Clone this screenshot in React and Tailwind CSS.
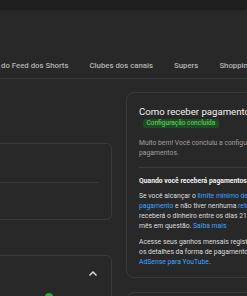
export default function App() {
  const link = "text-[#3ea6ff]";
  return (
    <div
      className="w-[247px] h-[296px] overflow-hidden bg-[#282828] flex flex-col"
      style={{ fontFamily: "Roboto, 'Noto Sans', sans-serif" }}
    >
      {/* top bar */}
      <div className="h-[8px] shrink-0 bg-[#1f1f1f] overflow-hidden shadow-[0_1px_3px_rgba(0,0,0,0.5)] relative z-10">
        <div className="-mt-[7px] text-[8px] leading-[10px] text-[#8a8a8a] whitespace-nowrap">
          seu canal
        </div>
      </div>

      {/* tabs */}
      <div className="shrink-0 h-[71px] border-b border-[#3a3a3a] flex items-end pb-[7px]">
        <div className="flex gap-[21px] pl-[1px] text-[7.8px] leading-[10px] font-medium text-[#b5b5b5] whitespace-nowrap">
          <span>do Feed dos Shorts</span>
          <span>Clubes dos canais</span>
          <span>Supers</span>
          <span>Shopping</span>
        </div>
      </div>

      {/* content */}
      <div className="flex gap-[14px] pt-[13px]">
        {/* left column */}
        <div className="w-[112px] shrink-0 flex flex-col pt-[51px] gap-[35px]">
          <div className="h-[77px] border-y border-r border-[#3a3a3a] rounded-r-[6px] flex flex-col">
            <div className="h-[38px]" />
            <div className="h-px bg-[#3a3a3a] mr-[12px]" />
          </div>
          <div className="h-[60px] border-t border-r border-[#3a3a3a] rounded-tr-[6px] relative">
            <svg
              className="absolute left-[88px] top-[14px]"
              width="10"
              height="7"
              viewBox="0 0 10 7"
            >
              <path d="M1.5 5.5 L5 2 L8.5 5.5" stroke="#e0e0e0" strokeWidth="1.4" fill="none" />
            </svg>
            <div className="absolute left-[45px] top-[37px] w-[8px] h-[8px] rounded-full bg-[#2ba640]" />
          </div>
        </div>

        {/* right column */}
        <div className="w-[240px] shrink-0 flex flex-col gap-[14px]">
          <div className="border border-[#3a3a3a] rounded-[8px] pl-[12px] pt-[12px] pb-[10px] flex flex-col whitespace-nowrap">
            <div className="text-[9.6px] leading-[13px] text-[#f1f1f1]">Como receber pagamentos</div>
            <div className="mt-px ml-[4px] self-start bg-[#1f4a23] text-[#52c85e] text-[6.5px] leading-[8.5px] px-[3.5px] rounded-[2px] font-medium">
              Configuração concluída
            </div>
            <div className="mt-[10px] text-[6.8px] leading-[10px] text-[#a0a0a0]">
              <div>Muito bem! Você concluiu a configuração de</div>
              <div>pagamentos.</div>
            </div>
            <div className="mt-[9px] h-px bg-[#3a3a3a] mr-[12px]" />
            <div className="mt-[8px] text-[6.8px] leading-[10px] font-bold text-[#f1f1f1]">
              Quando você receberá pagamentos
            </div>
            <div className="mt-[5px] text-[6.8px] leading-[10.2px] text-[#dedede]">
              <div>
                Se você alcançar o <span className={link}>limite mínimo de</span>
              </div>
              <div>
                <span className={link}>pagamento</span> e não tiver nenhuma{" "}
                <span className={link}>retenção ativa</span>, você
              </div>
              <div>receberá o dinheiro entre os dias 21 e 26 do mês seguinte ao</div>
              <div>
                mês em questão. <span className={link}>Saiba mais</span>
              </div>
            </div>
            <div className="mt-[6px] text-[6.8px] leading-[10px] text-[#dedede]">
              <div>Acesse seus ganhos mensais registrados e veja</div>
              <div>os detalhes da forma de pagamento na sua conta do</div>
              <div>
                <span className={link}>AdSense para YouTube</span>.
              </div>
            </div>
          </div>
          <div className="h-[40px] border border-[#3a3a3a] rounded-[8px]" />
        </div>
      </div>
    </div>
  );
}
